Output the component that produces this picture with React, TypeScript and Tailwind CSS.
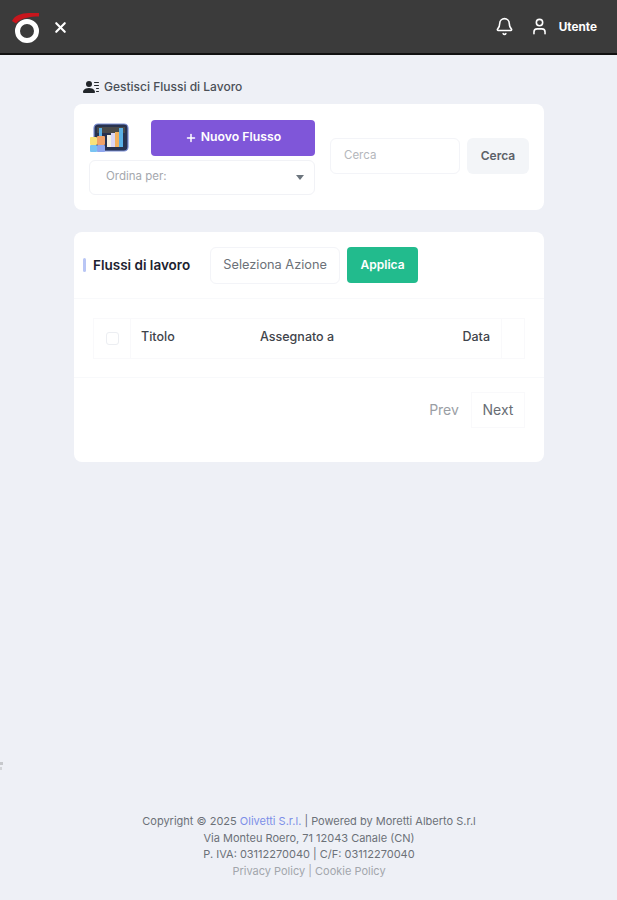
import { Bell, Plus, User, X } from 'lucide-react'
import { BsPersonLinesFill } from 'react-icons/bs'

// Logo: red arc over a white ring
function Logo() {
  return (
    <svg width="32" height="34" viewBox="0 0 32 34" fill="none">
      <path d="M1 11 C4 5 10 3.5 18 3 L28 3 L28 6.5 C19 6.5 10 8 5 13.5 Z" fill="#c8161d" />
      <ellipse cx="16" cy="21" rx="9.5" ry="9.5" stroke="#ffffff" strokeWidth="5" />
    </svg>
  )
}

function ChartIcon() {
  return (
    <svg width="40" height="30" viewBox="0 0 40 30" fill="none">
      <rect x="5" y="1" width="34" height="27" rx="4" fill="#27324f" stroke="#7c8fd6" strokeWidth="1.2" />
      <rect x="8" y="4" width="28" height="6" fill="#4a4a4a" />
      <rect x="10" y="5" width="3" height="19" fill="#5ab0e6" />
      <rect x="18" y="12" width="4" height="12" fill="#f4f1e4" />
      <rect x="22" y="10" width="4" height="14" fill="#d9d6f6" />
      <rect x="26" y="9" width="4" height="15" fill="#f2b05e" />
      <rect x="30" y="5" width="4" height="19" fill="#5ab0e6" />
      <rect x="1" y="14" width="7" height="8" rx="1" fill="#f7e27a" />
      <rect x="8" y="13" width="8" height="9" rx="1" fill="#f0a268" />
      <rect x="1" y="22" width="7" height="7" rx="1" fill="#79c4f2" />
      <rect x="8" y="22" width="8" height="7" rx="1" fill="#8ea6ee" />
    </svg>
  )
}

export default function App() {
  return (
    <div className="relative flex min-h-screen flex-col bg-[#eef0f6] font-['Inter',sans-serif] text-[#212529]">
      <header className="flex h-[55px] shrink-0 items-center justify-between border-b-2 border-[#111111] bg-[#3b3b3b] pl-[11px] pr-5 text-white">
        <div className="flex items-center gap-[9px]">
          <Logo />
          <X size={17} strokeWidth={3} className="mt-[1px]" />
        </div>
        <div className="flex items-center">
          <Bell size={19} strokeWidth={2} />
          <User size={19} strokeWidth={2} className="ml-[16px]" />
          <span className="ml-[10px] mt-[2px] text-[11.75px] font-bold">Utente</span>
        </div>
      </header>

      <main className="ml-[74px] w-[470px]">
        <div className="mt-[25px] flex h-[14px] items-center pl-[9px] text-xs font-medium text-[#4a4f57]">
          <BsPersonLinesFill size={16} className="text-[#212529]" />
          <span className="ml-[5px]">Gestisci Flussi di Lavoro</span>
        </div>

        <section className="mt-[10px] flex h-[106px] items-center rounded-lg bg-white px-[15px]">
          <div className="w-[226px]">
            <div className="flex items-center justify-between">
              <ChartIcon />
              <button className="flex h-9 w-[164px] items-center justify-center gap-1 rounded-[4px] bg-[#7f56d9] text-[12.25px] font-semibold text-white">
                <Plus size={12} strokeWidth={3} />
                Nuovo Flusso
              </button>
            </div>
            <div className="mt-1 flex h-[35px] items-center justify-between rounded-md border border-[#f1f2f6] pl-4 pr-[10px] text-[11.5px] text-[#a5a8ae]">
              Ordina per:
              <span className="h-0 w-0 border-x-[4px] border-t-[5px] border-x-transparent border-t-[#6c757d]" />
            </div>
          </div>
          <div className="mb-[2px] ml-[15px] flex items-center gap-[7px]">
            <div className="flex h-9 w-[130px] items-center rounded-md border border-[#f3f4f8] pl-[13px] text-[11.5px] text-[#b4b7bc]">
              Cerca
            </div>
            <button className="h-9 w-[62px] rounded-md bg-[#f3f5f8] text-xs font-semibold text-[#5c6168]">
              Cerca
            </button>
          </div>
        </section>

        <section className="mt-[22px] h-[230px] rounded-lg bg-white">
          <div className="flex h-[67px] items-center border-b border-[#f8f9fb] pl-[9px]">
            <span className="h-[14px] w-[3px] rounded bg-[#b9c6f5]" />
            <h2 className="ml-[7px] text-[13.5px] font-semibold text-[#1c2230]">Flussi di lavoro</h2>
            <div className="ml-[20px] flex h-[37px] w-[130px] items-center justify-center rounded-md border border-[#f3f4f8] text-[12.75px] text-[#6c7178]">
              Seleziona Azione
            </div>
            <button className="ml-[7px] h-9 w-[71px] rounded-[4px] bg-[#22bb8d] text-xs font-semibold text-white">
              Applica
            </button>
          </div>

          <div className="border-b border-[#f8f9fb] px-[19px] pb-[18px] pt-[19px]">
            <div className="flex h-[41px] w-[432px] items-center border border-[#f9f9fb] text-[12.5px] font-medium text-[#3f444b]">
              <div className="flex h-full w-[37px] items-center justify-center border-r border-[#f9f9fb]">
                <span className="h-[13px] w-[13px] rounded-[3px] border border-[#eceef2]" />
              </div>
              <div className="w-[119px] pb-[3px] pl-[10px]">Titolo</div>
              <div className="flex-1 pb-[3px] pl-[10px]">Assegnato a</div>
              <div className="pb-[3px] pr-[11px]">Data</div>
              <div className="h-full w-[23px] border-l border-[#f9f9fb]" />
            </div>
          </div>

          <div className="mt-[14px] flex justify-end pr-[19px] text-sm">
            <div className="flex h-9 w-[54px] items-center justify-center text-[#9a9ea4]">
              Prev
            </div>
            <div className="flex h-9 w-[54px] items-center justify-center border border-[#f9f9fb] text-[#686d74]">
              Next
            </div>
          </div>
        </section>
      </main>

      <footer className="mt-auto pb-[21px] pl-[1px] text-center text-[11px] leading-[16.4px] text-[#6c7178]">
        <p>
          Copyright © 2025 <span className="text-[#7c8fe8]">Olivetti S.r.l.</span> | Powered by Moretti Alberto S.r.l
        </p>
        <p>Via Monteu Roero, 71 12043 Canale (CN)</p>
        <p>P. IVA: 03112270040 | C/F: 03112270040</p>
        <p className="text-[#a2a6ac]">Privacy Policy | Cookie Policy</p>
      </footer>

      {/* sliver of the collapsed sidebar at the left edge */}
      <span className="absolute left-0 top-[762px] h-[3px] w-[3px] bg-[#c6c8cc]" />
      <span className="absolute left-0 top-[767px] h-[3px] w-[2px] bg-[#d2d4d8]" />
    </div>
  )
}
